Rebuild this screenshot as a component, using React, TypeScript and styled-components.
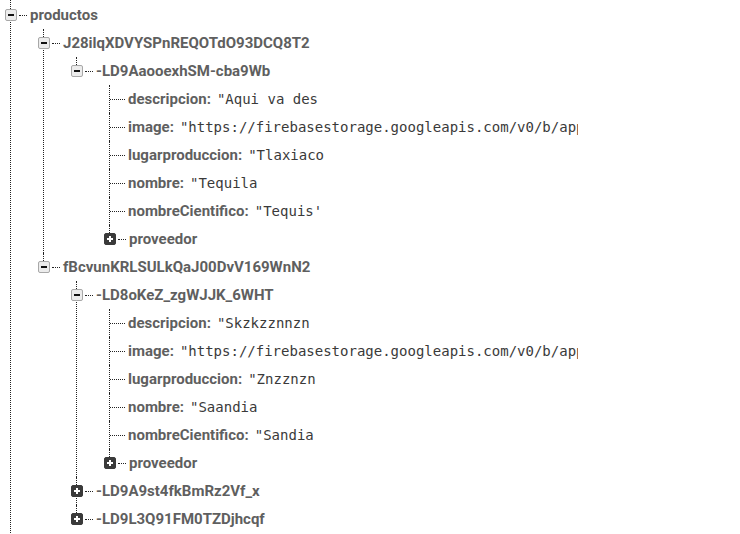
import React from "react";
import styled, { createGlobalStyle, css } from "styled-components";

const GlobalStyle = createGlobalStyle`
  html, body { margin: 0; padding: 0; background: #ffffff; }
  body { font-family: Roboto, "Noto Sans", sans-serif; overflow: hidden; }
`;

type Node = {
  key: string;
  value?: string;
  open?: boolean;
  children?: Node[];
};

const data: Node[] = [
  {
    key: "productos",
    open: true,
    children: [
      {
        key: "J28ilqXDVYSPnREQOTdO93DCQ8T2",
        open: true,
        children: [
          {
            key: "-LD9AaooexhSM-cba9Wb",
            open: true,
            children: [
              { key: "descripcion", value: "\"Aqui va des" },
              { key: "image", value: "\"https://firebasestorage.googleapis.com/v0/b/app" },
              { key: "lugarproduccion", value: "\"Tlaxiaco" },
              { key: "nombre", value: "\"Tequila" },
              { key: "nombreCientifico", value: "\"Tequis'" },
              { key: "proveedor", open: false, children: [] },
            ],
          },
        ],
      },
      {
        key: "fBcvunKRLSULkQaJ00DvV169WnN2",
        open: true,
        children: [
          {
            key: "-LD8oKeZ_zgWJJK_6WHT",
            open: true,
            children: [
              { key: "descripcion", value: "\"Skzkzznnzn" },
              { key: "image", value: "\"https://firebasestorage.googleapis.com/v0/b/app" },
              { key: "lugarproduccion", value: "\"Znzznzn" },
              { key: "nombre", value: "\"Saandia" },
              { key: "nombreCientifico", value: "\"Sandia" },
              { key: "proveedor", open: false, children: [] },
            ],
          },
          { key: "-LD9A9st4fkBmRz2Vf_x", open: false, children: [] },
          { key: "-LD9L3Q91FM0TZDjhcqf", open: false, children: [] },
        ],
      },
    ],
  },
];

const Page = styled.div`
  padding: 1px 0 0 10px;
  height: 533px;
  overflow: hidden;
`;

const List = styled.ul<{ $nested?: boolean }>`
  list-style: none;
  margin: 0;
  padding: 0;
  ${(p) =>
    p.$nested &&
    css`
      margin-left: 33px;
    `}
`;

const Item = styled.li<{ $last: boolean; $root?: boolean }>`
  position: relative;
  &::before {
    content: "";
    position: absolute;
    left: 0;
    top: ${(p) => (p.$root ? "-1px" : "0")};
    ${(p) =>
      p.$last
        ? css`
            height: 14px;
          `
        : css`
            bottom: ${p.$root ? "-2px" : "0"};
          `}
    border-left: 1px dotted #222;
  }
`;

const Row = styled.div`
  position: relative;
  display: flex;
  align-items: center;
  height: 28px;
  white-space: nowrap;
`;

const Toggle = styled.span<{ $open: boolean }>`
  position: relative;
  z-index: 1;
  box-sizing: border-box;
  width: 12px;
  height: 12px;
  margin-left: -5px;
  border-radius: 2px;
  display: inline-flex;
  align-items: center;
  justify-content: center;
  ${(p) =>
    p.$open
      ? css`
          background: #ececec;
          border: 1px solid #a8a8a8;
        `
      : css`
          background: #3a3a3a;
          border: 1px solid #3a3a3a;
        `}
`;

const Bar = styled.span<{ $light: boolean; $vertical?: boolean }>`
  position: absolute;
  left: 50%;
  top: 50%;
  width: ${(p) => (p.$vertical ? "2px" : "6px")};
  height: ${(p) => (p.$vertical ? "6px" : "2px")};
  transform: translate(-50%, -50%);
  background: ${(p) => (p.$light ? "#ffffff" : "#111111")};
`;

const Connector = styled.span<{ $leaf: boolean }>`
  display: inline-block;
  width: ${(p) => (p.$leaf ? "15px" : "8px")};
  margin-left: ${(p) => (p.$leaf ? "1px" : "2px")};
  margin-right: 3px;
  border-top: 1px dotted #222;
  align-self: center;
`;

const Key = styled.span`
  font-family: Roboto, "Noto Sans", sans-serif;
  font-size: 15px;
  font-weight: 700;
  color: #5f5f5f;
`;

const Value = styled.span`
  font-family: "DejaVu Sans Mono", "Liberation Mono", monospace;
  font-size: 14px;
  color: #3a3a3a;
  margin-left: 6px;
  max-width: 398px;
  overflow: hidden;
  display: inline-block;
`;

function TreeNode({ node, last, root }: { node: Node; last: boolean; root?: boolean }) {
  const isLeaf = node.value !== undefined;
  const open = !!node.open;
  return (
    <Item $last={last} $root={root}>
      <Row>
        {!isLeaf && (
          <Toggle $open={open}>
            <Bar $light={!open} />
            {!open && <Bar $light $vertical />}
          </Toggle>
        )}
        <Connector $leaf={isLeaf} />
        {isLeaf ? (
          <>
            <Key>{node.key}:</Key>
            <Value>{node.value}</Value>
          </>
        ) : (
          <Key>{node.key}</Key>
        )}
      </Row>
      {open && node.children && node.children.length > 0 && (
        <List $nested>
          {node.children.map((c, i) => (
            <TreeNode key={c.key + i} node={c} last={i === node.children!.length - 1} />
          ))}
        </List>
      )}
    </Item>
  );
}

export default function App() {
  return (
    <>
      <GlobalStyle />
      <Page>
        <List>
          {data.map((n) => (
            <TreeNode key={n.key} node={n} last={false} root />
          ))}
        </List>
      </Page>
    </>
  );
}
